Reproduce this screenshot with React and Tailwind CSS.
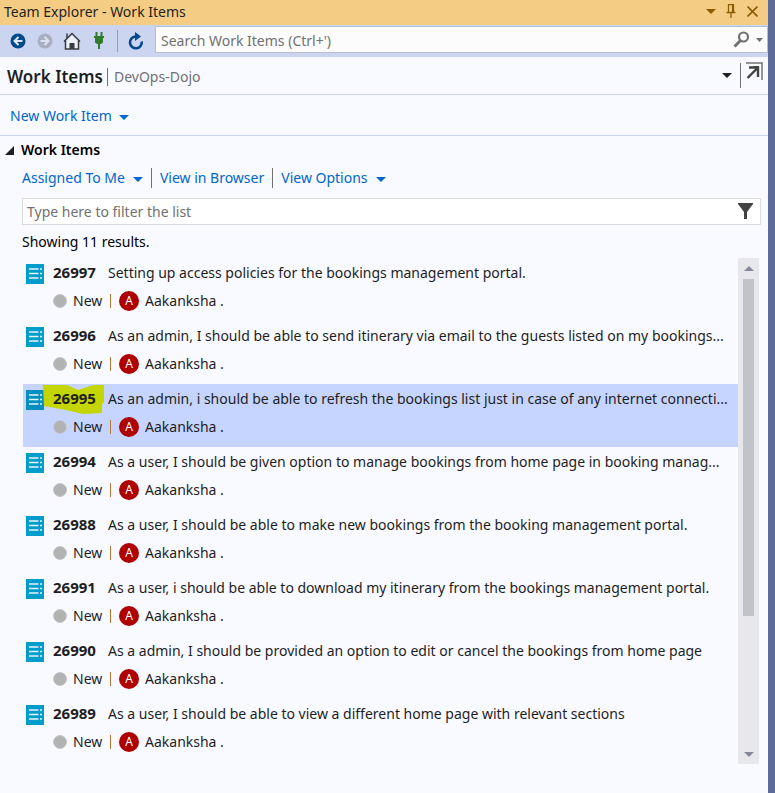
import React from "react";

const items = [
  { id: "26997", title: "Setting up access policies for the bookings management portal." },
  { id: "26996", title: "As an admin, I should be able to send itinerary via email to the guests listed on my bookings..." },
  { id: "26995", title: "As an admin, i should be able to refresh the bookings list just in case of any internet connecti...", selected: true },
  { id: "26994", title: "As a user, I should be given option to manage bookings from home page in booking manag..." },
  { id: "26988", title: "As a user, I should be able to make new bookings from the booking management portal." },
  { id: "26991", title: "As a user, i should be able to download my itinerary from the bookings management portal." },
  { id: "26990", title: "As a admin, I should be provided an option to edit or cancel the bookings from home page" },
  { id: "26989", title: "As a user, I should be able to view a different home page with relevant sections" },
];

function Caret({ className = "", small = false }) {
  return (
    <svg className={className} width={small ? 7 : 10} height={small ? 4 : 5} viewBox="0 0 10 5" preserveAspectRatio="none" fill="currentColor" aria-hidden="true">
      <path d="M0 0h10L5 5z" />
    </svg>
  );
}

function TitleBar() {
  return (
    <div className="flex h-[25px] items-start bg-[#f5cc84] pl-1 pr-[10px] text-[#1e1e1e]">
      <h1 className="flex-1 text-sm leading-6">Team Explorer - Work Items</h1>
      <div className="flex h-[22px] items-center gap-[10px] text-[#8a5d00]">
        <button aria-label="Window position">
          <Caret className="block" />
        </button>
        <button aria-label="Pin">
          <svg className="block" width="10" height="14" viewBox="0 0 10 14" fill="none" stroke="currentColor" aria-hidden="true">
            <path d="M2.500 8.500V.7h5v7.800M.5 8.500h9M5 8.500V14" strokeWidth="1.300" />
            <path d="M6.700 1v7.500" strokeWidth="1.600" />
          </svg>
        </button>
        <button aria-label="Close" className="ml-px">
          <svg className="block" width="11" height="11" viewBox="0 0 11 11" fill="none" stroke="currentColor" strokeWidth="1.600" aria-hidden="true">
            <path d="M.5.500l10 10M10.500.500l-10 10" />
          </svg>
        </button>
      </div>
    </div>
  );
}

function Toolbar() {
  return (
    <div className="flex h-8 items-start bg-[#ccd5f0]">
      <div className="flex h-[31px] w-[155px] shrink-0 items-center pl-[10px]">
        <button aria-label="Back">
          <svg className="block" width="16" height="16" viewBox="0 0 16 16" aria-hidden="true">
            <circle cx="8" cy="8" r="7.500" fill="#00498c" />
            <path d="M12.500 8H4.500M8.500 4L4.500 8l4 4" fill="none" stroke="#dfe6f8" strokeWidth="2" />
          </svg>
        </button>
        <button aria-label="Forward" className="ml-[11px]">
          <svg className="block" width="16" height="16" viewBox="0 0 16 16" aria-hidden="true">
            <circle cx="8" cy="8" r="7.500" fill="#a9aec1" />
            <path d="M3.500 8h8M7.500 4l4 4-4 4" fill="none" stroke="#dde3f4" strokeWidth="2" />
          </svg>
        </button>
        <button aria-label="Home" className="ml-[10px]">
          <svg className="block" width="18" height="18" viewBox="0 0 18 18" aria-hidden="true">
            <path d="M2.500 9.500V17h13V9.500L9 3z" fill="#eef0f8" />
            <path d="M1 9.500L9 1.500l8 8M2.500 8.500V17h13V8.500M4 6V1.500" fill="none" stroke="#3b3b40" strokeWidth="1.500" />
            <path d="M6.500 17v-6h5v6z" fill="#3b3b40" />
          </svg>
        </button>
        <button aria-label="Manage connections" className="ml-[13px]">
          <svg className="block" width="10" height="17" viewBox="0 0 10 17" fill="#2f7d2b" aria-hidden="true">
            <path d="M1.500 0h2v4h3V0h2v4H10v2H9v4.500L7 12H6v5H4v-5H3l-2-1.500V6H0V4h1.500z" />
          </svg>
        </button>
        <span className="ml-[13px] h-[22px] w-px bg-[#8c9cc5]" />
        <button aria-label="Refresh" className="ml-[10px]">
          <svg className="block" width="16" height="18" viewBox="0 0 16 18" aria-hidden="true">
            <path d="M9 4.500H7.500A5.900 5.900 0 1 0 13.700 9.500" fill="none" stroke="#00498c" strokeWidth="2.600" />
            <path d="M7 0l6 4.500L7 9z" fill="#00498c" />
          </svg>
        </button>
      </div>
      <div className="mt-px flex h-[27px] min-w-0 flex-1 items-center border border-[#b9bfcc] bg-[#fcfcfc] pl-[5px] pr-1 text-[#717171]">
        <input aria-label="Search Work Items" placeholder="Search Work Items (Ctrl+')" className="min-w-0 flex-1 bg-transparent pt-[2px] text-sm leading-6 outline-none placeholder:text-[#717171]" />
        <button aria-label="Search">
          <svg className="block" width="17" height="17" viewBox="0 0 17 17" fill="none" stroke="currentColor" aria-hidden="true">
            <circle cx="10.500" cy="6" r="4.500" strokeWidth="2.200" />
            <path d="M7.500 9.500L1.500 15.500" strokeWidth="3" />
          </svg>
        </button>
        <button aria-label="Search options" className="ml-[6px]">
          <Caret small className="block" />
        </button>
      </div>
    </div>
  );
}

function PageHeader() {
  return (
    <div className="flex h-[38px] items-center border-b border-[#ccd5f0] pl-[7px] pr-[5px]">
      <h2 className="pt-[2px] text-[17px] font-semibold leading-6 text-[#1e1e1e]">Work Items</h2>
      <span className="ml-1 mt-[2px] h-[18px] w-px bg-[#717171]" />
      <span className="ml-[6px] flex-1 pt-[3px] text-sm leading-6 text-[#717171]">DevOps-Dojo</span>
      <button aria-label="Choose page" className="text-[#1e1e1e]">
        <Caret className="block" />
      </button>
      <span className="ml-2 h-[25px] w-px bg-[#717171]" />
      <button aria-label="Undock" className="mb-[10px] ml-[5px]">
        <svg className="block" width="17" height="18" viewBox="0 0 17 18" fill="none" aria-hidden="true">
          <path d="M0 1h16v17" stroke="#717171" strokeWidth="1.500" />
          <path d="M1.500 16L11 6.500" stroke="#424242" strokeWidth="2.400" />
          <path d="M3 5.500h9V15" stroke="#424242" strokeWidth="2.400" />
          <path d="M7 4h6v7z" fill="#424242" />
        </svg>
      </button>
    </div>
  );
}

function WorkItem({ item }) {
  return (
    <li className={item.selected ? "h-[63px] bg-[#c5d5ff] pl-[3px]" : "h-[63px] pl-[3px]"}>
      <div className="flex h-[30px] items-center">
        <svg className="mt-[2px] block shrink-0" width="18" height="20" viewBox="0 0 18 20" aria-hidden="true">
          <path d="M0 0h18v20H0z" fill={item.selected ? "#0390c0" : "#009ccc"} />
          <path d="M3 5h9.500M3 9.500h9.500M3 14h9.500M14 5h2M14 9.500h2M14 14h2" stroke="#e4f5fb" strokeWidth="1.500" />
        </svg>
        <span className="relative ml-[9px] w-[55px] shrink-0 pb-[2px] text-[15px] font-bold leading-6 text-[#1e1e1e]">
          {item.selected && (
            <svg className="absolute -left-[10px] -top-[2px]" width="61" height="30" viewBox="0 0 61 30" aria-hidden="true">
              <path d="M0 1h24l11 5 15-5h11v17l-2 2v9l-19 1-17-4-22-4z" fill="#c4d600" />
            </svg>
          )}
          <span className="relative">{item.id}</span>
        </span>
        <span className="min-w-0 flex-1 whitespace-nowrap text-sm leading-6 text-[#1e1e1e]">{item.title}</span>
      </div>
      <div className="flex h-[26px] items-center pl-[27px] text-sm leading-6 text-[#1e1e1e]">
        <span className="size-[14px] rounded-full border border-[#c4c8d3] bg-[#b2b2b2]" />
        <span className="ml-[6px] w-[37px]">New</span>
        <span className="h-[14px] w-px bg-[#b5763a]" />
        <span className="ml-2 flex size-5 items-center justify-center rounded-full bg-[#ae0000] text-xs leading-5 text-white">A</span>
        <span className="ml-[6px]">Aakanksha .</span>
      </div>
    </li>
  );
}

function ScrollBar() {
  return (
    <div className="flex w-[21px] shrink-0 flex-col items-center bg-[#e8e8ec] pb-[7px] pt-2 text-[#868999]">
      <button aria-label="Scroll up">
        <Caret className="block rotate-180" />
      </button>
      <div className="mt-2 h-[337px] w-[11px] bg-[#c2c3c9]" />
      <button aria-label="Scroll down" className="mt-auto">
        <Caret className="block" />
      </button>
    </div>
  );
}

export default function App() {
  return (
    <div className="flex min-h-screen bg-[#5d6b99] font-['Noto_Sans','Open_Sans',sans-serif]">
      <main className="mr-[7px] min-w-0 flex-1 bg-[#f9faff]">
        <TitleBar />
        <Toolbar />
        <PageHeader />
        <div className="flex h-[41px] items-center border-b border-[#ccd5f0] pl-[10px] pt-px text-[#0066cc]">
          <button className="flex items-center gap-[7px] text-sm leading-6">
            New Work Item
            <Caret className="mt-[3px]" />
          </button>
        </div>
        <section>
          <button className="flex h-7 items-center pl-[5px] text-sm font-semibold leading-6 text-black">
            <svg width="9" height="9" viewBox="0 0 9 9" fill="#1e1e1e" aria-hidden="true">
              <path d="M9 0v9H0z" />
            </svg>
            <span className="ml-[7px]">Work Items</span>
          </button>
          <div className="flex h-7 items-center pl-[22px] text-sm leading-6 text-[#0066cc]">
            <button className="flex items-center gap-2">
              Assigned To Me
              <Caret className="mt-[3px]" />
            </button>
            <span className="mx-2 h-5 w-px bg-[#717171]" />
            <a href="#browser">View in Browser</a>
            <span className="mx-2 h-5 w-px bg-[#717171]" />
            <button className="flex items-center gap-2">
              View Options
              <Caret className="mt-[3px]" />
            </button>
          </div>
          <div className="ml-[22px] mr-[7px] mt-[6px] flex h-[27px] items-center border border-[#d8dbe6] bg-white pl-1 pr-[7px]">
            <input aria-label="Filter the list" placeholder="Type here to filter the list" className="min-w-0 flex-1 bg-transparent text-sm leading-6 outline-none placeholder:text-[#717171]" />
            <button aria-label="Filter">
              <svg className="mb-[2px] block" width="15" height="16" viewBox="0 0 15 16" fill="#424242" aria-hidden="true">
                <path d="M0 0h15v1L9 9v7H6V9L0 1z" />
              </svg>
            </button>
          </div>
          <p className="flex h-[33px] items-center pl-[22px] text-sm leading-6 text-black">Showing 11 results.</p>
          <div className="ml-[23px] mr-[9px] flex">
            <ul className="min-w-0 flex-1 overflow-hidden pb-[2px]">
              {items.map((item) => (
                <WorkItem key={item.id} item={item} />
              ))}
            </ul>
            <ScrollBar />
          </div>
        </section>
      </main>
    </div>
  );
}
